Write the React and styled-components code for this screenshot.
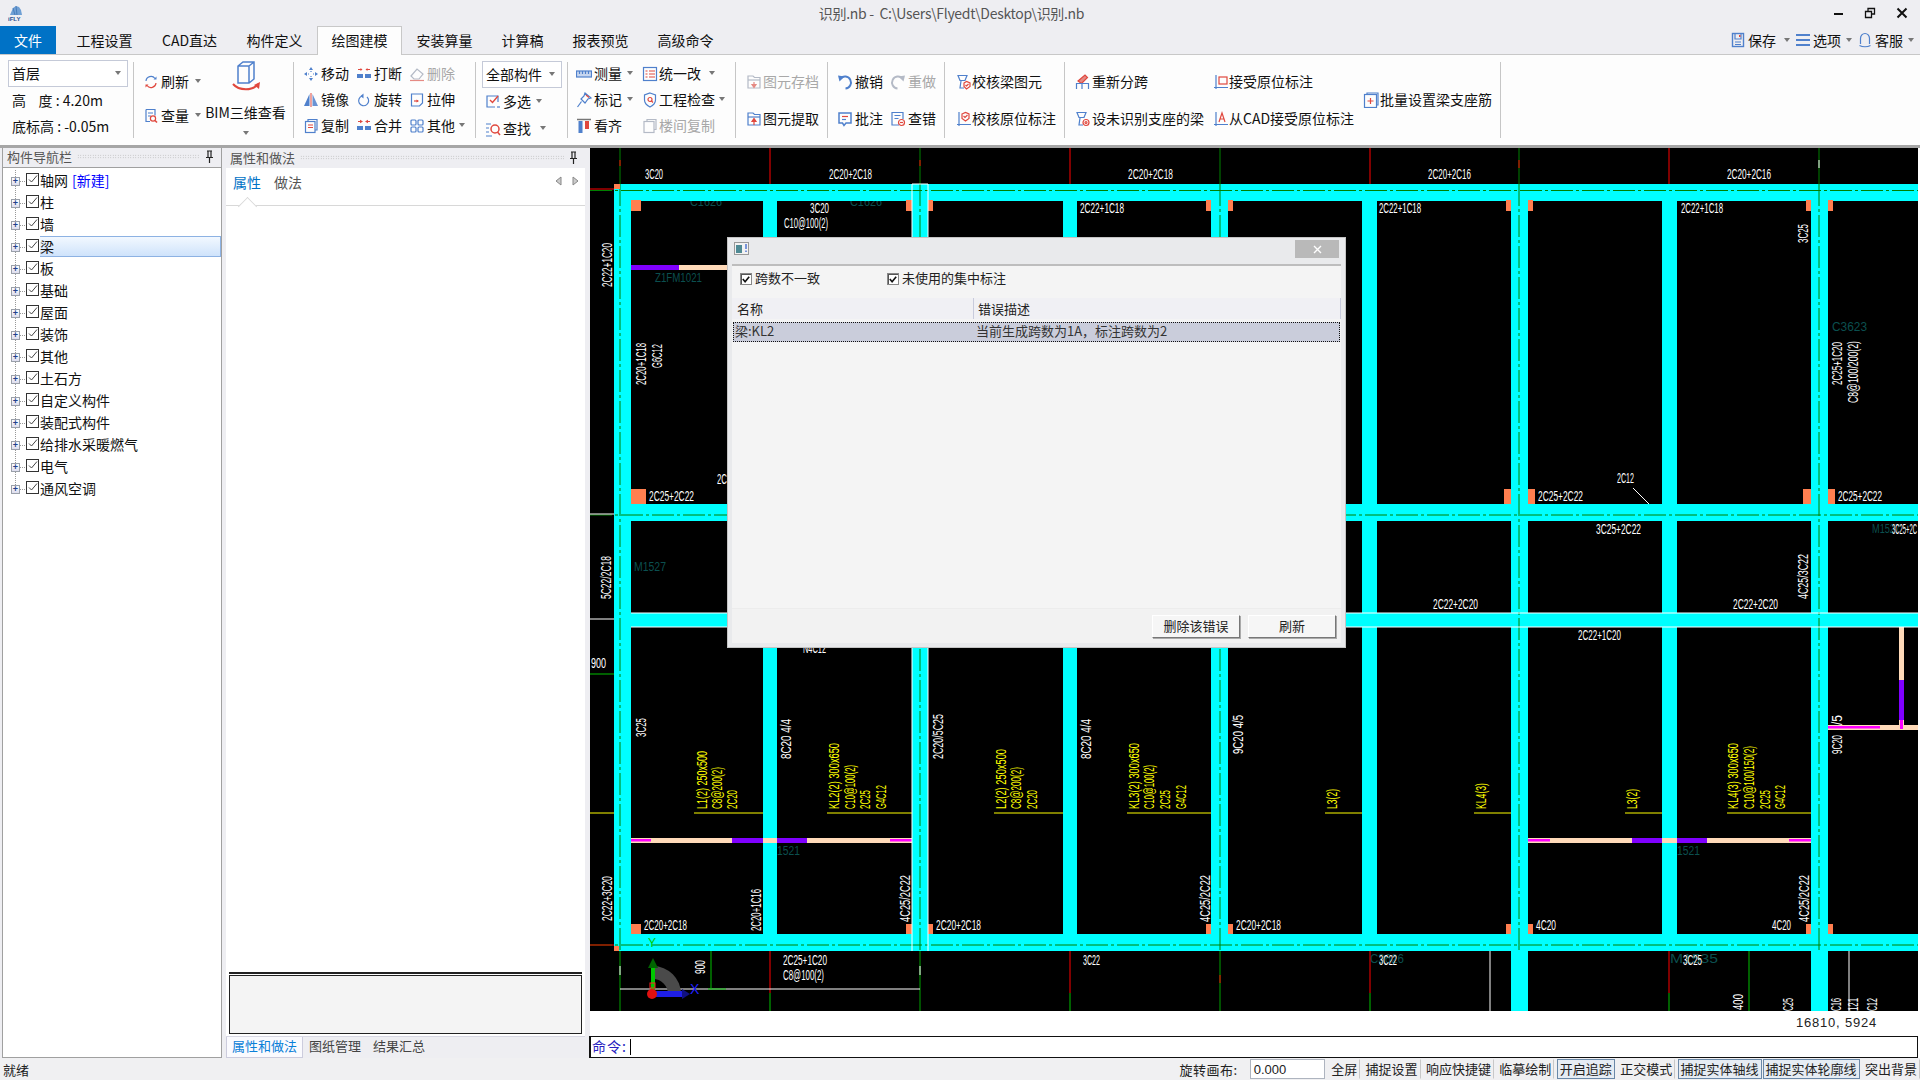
import styled, { createGlobalStyle } from "styled-components";

const BLUE = "#4f80cc";
const RED = "#e0483e";
const GREY = "#b4bac6";
const FONT = `"Noto Sans CJK SC", "Liberation Sans", sans-serif`;

const GlobalStyle = createGlobalStyle`
  html, body { margin: 0; padding: 0; background: #eeeef2; }
  * { box-sizing: border-box; }
  body { font-family: ${FONT}; font-size: 14px; color: #111; }
`;

const Page = styled.div`
  width: 1920px;
  height: 1080px;
  display: flex;
  flex-direction: column;
  overflow: hidden;
  background: #eeeef2;
`;

/* title bar */
const TitleBar = styled.div`
  height: 26px;
  display: grid;
  grid-template-columns: 1fr auto 1fr;
  align-items: center;
  padding: 0 0 0 8px;
`;
const TitleText = styled.div`
  color: #555;
  font-size: 14px;
  line-height: 26px;
  letter-spacing: -0.3px;
  white-space: pre;
  margin-right: 25px;
`;
const WindowButtons = styled.div`
  display: flex;
  justify-content: flex-end;
  align-items: center;
  gap: 20px;
  padding-right: 12px;
`;

/* tabs */
const TabRow = styled.div`
  height: 29px;
  display: flex;
  align-items: stretch;
  border-bottom: 1px solid #c8c8c8;
`;
const FileTab = styled.div`
  width: 56px;
  margin-right: 6px;
  background: #0072c6;
  color: #fff;
  text-align: center;
  line-height: 29px;
  flex-shrink: 0;
`;
const Tab = styled.div`
  padding: 0 14.5px;
  min-width: ${(p) => p.$min || 0}px;
  text-align: center;
  line-height: 29px;
  height: ${(p) => (p.$active ? "29px" : "28px")};
  background: ${(p) => (p.$active ? "#fdfdfd" : "transparent")};
  box-shadow: ${(p) => (p.$active ? "inset 1px 1px 0 #c8c8c8, inset -1px 0 0 #c8c8c8" : "none")};
`;
const QuickTools = styled.div`
  margin-left: auto;
  display: flex;
  align-items: center;
  gap: 5px;
  padding-right: 6px;
`;
const QuickTool = styled.div`
  display: flex;
  align-items: center;
  gap: 2px;
`;

/* ribbon */
const Ribbon = styled.div`
  height: 93px;
  display: flex;
  align-items: flex-start;
  padding-top: 7px;
  background: #fdfdfd;
  border-bottom: 3px solid #a6a6a6;
`;
const Group = styled.div`
  width: ${(p) => p.$w}px;
  height: 76px;
  flex-shrink: 0;
  padding-left: ${(p) => p.$pad || 0}px;
  padding-top: ${(p) => p.$top || 0}px;
  border-right: 1px solid #c6c6c6;
  display: grid;
  grid-template-columns: ${(p) => p.$cols || "1fr"};
  grid-auto-rows: ${(p) => p.$row || 26}px;
  align-items: center;
`;
const FreeGroup = styled.div`
  width: ${(p) => p.$w}px;
  height: 76px;
  flex-shrink: 0;
  border-right: 1px solid #c6c6c6;
`;
const Item = styled.div`
  display: flex;
  align-items: center;
  gap: ${(p) => p.$gap ?? 2}px;
  white-space: nowrap;
  line-height: 20px;
  padding: 0 0 4px ${(p) => p.$left || 0}px;
  color: ${(p) => (p.$off ? "#a8a8a8" : "#111")};
  grid-area: ${(p) => p.$area || "auto"};
  & > svg {
    margin-top: 2px;
  }
`;
const Caret = styled.span`
  width: 0;
  height: 0;
  margin-left: ${(p) => p.$ml || 4}px;
  border: 3px solid transparent;
  border-top: 4px solid #777;
  border-bottom: 0;
  flex-shrink: 0;
`;
const Combo = styled.div`
  height: 27px;
  width: ${(p) => p.$w}px;
  display: flex;
  align-items: center;
  justify-content: space-between;
  padding: 0 6px 2px ${(p) => p.$left}px;
  background: #fff;
  border: 1px solid #c5cad8;
  margin-top: ${(p) => p.$mt || 0}px;
`;
const FloorColumn = styled.div`
  padding-left: 8px;
  display: flex;
  flex-direction: column;
`;
const FloorLine = styled.div`
  line-height: 20px;
  padding-left: 4px;
  margin-top: ${(p) => p.$mt}px;
  white-space: pre;
`;
const RefreshGrid = styled.div`
  display: grid;
  grid-template-columns: 62px 81px;
  padding-left: 9px;
`;
const RefreshColumn = styled.div`
  display: flex;
  flex-direction: column;
  gap: 10px;
  padding-top: 9px;
`;
const BimButton = styled.div`
  display: flex;
  flex-direction: column;
  align-items: center;
  line-height: 20px;
  white-space: nowrap;
  margin-top: -2px;
`;
const BimLabel = styled.div`
  margin-top: 8px;
`;
const BimCaret = styled(Caret)`
  margin: 9px 0 0;
`;

const Ico = styled.svg.attrs({ viewBox: "0 0 16 16" })`
  width: 16px;
  height: 16px;
  flex-shrink: 0;
  fill: none;
  stroke-width: 1.2;
`;

/* main area */
const Main = styled.div`
  height: 910px;
  display: flex;
  align-items: stretch;
`;
const NavPanel = styled.div`
  width: 220px;
  margin: 0 4px 0 2px;
  display: flex;
  flex-direction: column;
  background: #fff;
  border: 1px solid #a0a0a0;
  border-top: 0;
`;
const PanelHead = styled.div`
  height: 20px;
  flex-shrink: 0;
  display: flex;
  align-items: center;
  gap: 5px;
  padding: 0 7px 2px 4px;
  background: #eeeef2;
  color: #555;
  font-size: 13px;
  border-bottom: ${(p) => (p.$line ? "1px solid #a0a0a0" : "0")};
`;
const Grip = styled.div`
  flex: 1;
  height: 5px;
  background-image: radial-gradient(#b4b4b4 0.7px, transparent 0.8px);
  background-size: 2.5px 2.5px;
`;
const Tree = styled.div`
  padding-top: 2px;
`;
const TreeRow = styled.div`
  height: 22px;
  display: flex;
  align-items: center;
  padding-left: 8px;
  background-image: repeating-linear-gradient(to bottom, #999 0 1px, transparent 1px 2px);
  background-size: 1px ${(p) => (p.$last ? "11px" : "22px")};
  background-position: 12px 0;
  background-repeat: no-repeat;
`;
const Plus = styled.span`
  width: 9px;
  height: 9px;
  flex-shrink: 0;
  border: 1px solid #9aa0aa;
  background: linear-gradient(#fff, #dde);
  display: flex;
  align-items: center;
  justify-content: center;
  color: #22408c;
  font: bold 9px/7px "Liberation Sans", sans-serif;
`;
const Dots = styled.span`
  width: 6px;
  height: 1px;
  flex-shrink: 0;
  background-image: repeating-linear-gradient(to right, #999 0 1px, transparent 1px 2px);
`;
const CheckBox = styled.span`
  width: 13px;
  height: 13px;
  margin-top: -3px;
  flex-shrink: 0;
  border: 1px solid #333;
  background: #fff;
  display: flex;
`;
const TreeLabel = styled.div`
  flex: 1;
  margin: -2px 0 0 1px;
  height: 21px;
  line-height: 18px;
  border: 1px solid ${(p) => (p.$sel ? "#8db2e3" : "transparent")};
  border-left-width: 0;
  background: ${(p) => (p.$sel ? "linear-gradient(#f2f8ff, #cfe3fb)" : "transparent")};
  white-space: nowrap;
`;
const NewLink = styled.span`
  color: #0000ff;
  margin-left: 4px;
`;

const PropsPanel = styled.div`
  width: 359px;
  margin-right: 5px;
  display: flex;
  flex-direction: column;
  background: #fff;
`;
const PropTabs = styled.div`
  height: 38px;
  flex-shrink: 0;
  display: flex;
  align-items: flex-start;
  gap: 13px;
  padding: 4px 6px 0 7px;
  border-bottom: 1px solid #d8d8d8;
  line-height: 20px;
`;
const PropTab = styled.div`
  position: relative;
  color: ${(p) => (p.$active ? "#0072c6" : "#555")};
  &::after {
    content: ${(p) => (p.$active ? '""' : "none")};
    position: absolute;
    left: 7px;
    top: 27px;
    width: 14px;
    height: 14px;
    background: #fff;
    border-left: 1px solid #d8d8d8;
    border-top: 1px solid #d8d8d8;
    transform: rotate(45deg) scale(0.9);
  }
`;
const PropArrows = styled.div`
  margin-left: auto;
  display: flex;
  gap: 10px;
  padding-top: 4px;
`;
const PropBody = styled.div`
  flex: 1;
`;
const NoteWrap = styled.div`
  padding: 0 3px;
  background: #fff;
`;
const NoteLine = styled.div`
  height: 2px;
  background: #222;
`;
const NoteBox = styled.div`
  height: 59px;
  margin-top: 1px;
  background: #f4f4f4;
  border: 1px solid #222;
`;
const BottomTabs = styled.div`
  height: 22px;
  margin-top: 2px;
  display: flex;
  background: #eeeef2;
  border-top: 1px solid #d8d8e4;
  font-size: 13px;
  line-height: 18px;
`;
const BottomTab = styled.div`
  padding: 0 6px;
  color: ${(p) => (p.$active ? "#0a80d8" : "#444")};
  background: ${(p) => (p.$active ? "#fafafe" : "transparent")};
  box-shadow: ${(p) => (p.$active ? "inset 1px 0 0 #ccd, inset -1px 0 0 #ccd, inset 0 -1px 0 #ccd" : "none")};
`;

const CanvasColumn = styled.div`
  position: relative;
  flex: 1;
  display: flex;
  flex-direction: column;
  background: #fff;
`;
const CadSvg = styled.svg`
  display: block;
  width: 1328px;
  height: 863px;
  background: #000;
  font-family: "Liberation Sans", sans-serif;
`;
const CoordRow = styled.div`
  height: 25px;
  line-height: 24px;
  text-align: right;
  padding-right: 43px;
  font-family: "Liberation Sans", sans-serif;
  font-size: 13px;
  letter-spacing: 0.8px;
  color: #222;
`;
const CommandRow = styled.div`
  height: 22px;
  width: 1329px;
  margin-left: -1px;
  display: flex;
  align-items: center;
  padding: 0 0 2px 1px;
  border: 1px solid #111;
  border-width: 1px 1px 1px 2px;
  color: #2a1fc0;
  letter-spacing: 1px;
`;
const CommandCursor = styled.span`
  width: 1px;
  height: 16px;
  margin: 2px 0 0 3px;
  background: #000;
`;

/* dialog */
const Dialog = styled.div`
  position: absolute;
  left: 137px;
  top: 89px;
  width: 619px;
  height: 411px;
  display: flex;
  flex-direction: column;
  padding: 0 4px 4px;
  background: #e9eaec;
  border: 1px solid #c4c4c4;
  font-size: 13px;
  color: #222;
`;
const DialogHead = styled.div`
  height: 28px;
  flex-shrink: 0;
  display: flex;
  align-items: center;
  justify-content: space-between;
  padding: 0 2px 5px 2px;
  border-bottom: 2px solid #bdbdbd;
`;
const DialogClose = styled.div`
  width: 44px;
  height: 18px;
  margin-top: 1px;
  background: #b9b9b9;
  color: #fff;
  display: flex;
  align-items: center;
  justify-content: center;
`;
const DialogBody = styled.div`
  flex: 1;
  display: flex;
  flex-direction: column;
  background: #f4f4f4;
`;
const FilterRow = styled.div`
  height: 32px;
  flex-shrink: 0;
  display: flex;
  align-items: flex-start;
  padding: 3px 0 0 8px;
`;
const Filter = styled.label`
  width: ${(p) => p.$w}px;
  display: flex;
  align-items: center;
  gap: 3px;
  line-height: 18px;
`;
const DialogCheck = styled.span`
  width: 12px;
  height: 12px;
  margin-top: 2px;
  border: 1px solid #888;
  box-shadow: inset 1px 1px 0 #555;
  background: #fff;
  display: flex;
`;
const ListHead = styled.div`
  height: 21px;
  flex-shrink: 0;
  display: grid;
  grid-template-columns: 236px 1fr;
  padding: 0 0 0 5px;
  background: #f0f0f4;
  line-height: 21px;
`;
const ListCell = styled.div`
  padding-left: ${(p) => p.$pad || 0}px;
  border-left: ${(p) => (p.$div ? "1px solid #c8cbdc" : "0")};
  border-right: ${(p) => (p.$div ? "1px solid #c8cbdc" : "0")};
`;
const ListRow = styled.div`
  height: 20px;
  margin: 3px 1px 0 1px;
  flex-shrink: 0;
  display: grid;
  grid-template-columns: 241px 1fr;
  padding-left: 2px;
  background: #cacddb;
  outline: 1px dotted #111;
  outline-offset: -1px;
  line-height: 18px;
  color: #333;
`;
const DialogFill = styled.div`
  flex: 1;
`;
const DialogFoot = styled.div`
  height: 35px;
  flex-shrink: 0;
  display: flex;
  justify-content: flex-end;
  gap: 8px;
  padding: 6px 5px 0 0;
  background: #f2f2f2;
  border-top: 1px solid #ececec;
`;
const DialogButton = styled.div`
  width: 88px;
  height: 23px;
  text-align: center;
  line-height: 19px;
  background: #f6f6f6;
  border: 1px solid;
  border-color: #fff #777 #777 #fff;
  box-shadow: 1px 1px 0 #aaa;
`;

/* status bar */
const StatusBar = styled.div`
  height: 22px;
  display: flex;
  align-items: center;
  padding-left: 3px;
  background: #f0f0f2;
  font-size: 13px;
  color: #222;
`;
const StatusLeft = styled.div`
  margin-right: auto;
`;
const RotateLabel = styled.div`
  margin-right: 12px;
  letter-spacing: 0.5px;
`;
const RotateInput = styled.div`
  width: 75px;
  height: 20px;
  margin-right: 1px;
  padding-left: 3px;
  background: #fff;
  border: 1px solid #aeb4bf;
  line-height: 19px;
  font-family: "Liberation Sans", sans-serif;
  font-size: 13px;
`;
const StatusButton = styled.div`
  height: 20px;
  padding: 0 2px;
  margin-left: ${(p) => p.$ml ?? 2.4}px;
  line-height: 18px;
  white-space: nowrap;
  background: ${(p) => (p.$on ? "#e6ecf3" : "transparent")};
  border: 1px solid ${(p) => (p.$on ? "#6a88a8" : "transparent")};
  border-right-color: ${(p) => (p.$on ? "#6a88a8" : "#c8c8c8")};
`;

/* small drawings */
const icons = {
  refresh: (
    <Ico>
      <path d="M3 7a5 5 0 0 1 9-2.5" stroke={BLUE} />
      <path d="M13.5 2.5v3h-3z" fill={BLUE} />
      <path d="M13 9a5 5 0 0 1-9 2.5" stroke={RED} />
      <path d="M2.5 13.5v-3h3z" fill={RED} />
    </Ico>
  ),
  audit: (
    <Ico>
      <path d="M3 1.5h9v6M3 1.5v12h4" stroke={BLUE} />
      <path d="M5 5h5M5 8h3" stroke={BLUE} />
      <circle cx="10" cy="10.5" r="2.6" stroke={RED} />
      <path d="M12 12.5l2 2" stroke={RED} strokeWidth="1.6" />
    </Ico>
  ),
  move: (
    <Ico>
      <path d="M8 1l2 3H6zM8 15l-2-3h4zM1 8l3-2v4zM15 8l-3 2V6z" fill={BLUE} />
      <path d="M8 5v1M8 10v1M5 8h1M10 8h1" stroke={BLUE} />
    </Ico>
  ),
  split: (
    <Ico>
      <path d="M1 8h6v4H1zM9 8h6v4H9z" fill={BLUE} />
      <path d="M2 3.5h3.5M14 3.5h-3.5" stroke={RED} />
      <path d="M6.5 3.5L4.5 2v3zM9.5 3.5l2-1.500v3z" fill={RED} />
    </Ico>
  ),
  erase: (
    <Ico>
      <path d="M2 10l6-7 6 5-4 5H5z" stroke={GREY} />
      <path d="M1 14.500h14" stroke="#e58a84" />
    </Ico>
  ),
  mirror: (
    <Ico>
      <path d="M6.500 2v12H1z" fill={BLUE} />
      <path d="M7.500 1h1v14h-1z" fill={RED} />
      <path d="M9.500 2v12H15z" fill={BLUE} opacity="0.85" />
    </Ico>
  ),
  rotate: (
    <Ico>
      <path d="M6 4a5 5 0 1 0 5 1" stroke={BLUE} />
      <path d="M7.500 1.500v5L4.500 4z" fill={BLUE} />
    </Ico>
  ),
  stretch: (
    <Ico>
      <path d="M2.500 2h11v9l-3 3h-8z" stroke={BLUE} />
      <path d="M5 9h4" stroke={RED} />
      <path d="M10 9L7.500 7.500v3z" fill={RED} />
    </Ico>
  ),
  copy: (
    <Ico>
      <path d="M5 3V1.500h9V12h-2" stroke={BLUE} />
      <rect x="2.500" y="3.500" width="9.500" height="11" stroke={BLUE} />
      <path d="M5 7h5M5 9.500h5" stroke={RED} />
    </Ico>
  ),
  merge: (
    <Ico>
      <path d="M1 8h6v4H1zM9 8h6v4H9z" fill={BLUE} />
      <path d="M2 3.500h2M14 3.500h-2" stroke={RED} />
      <path d="M7 3.500L4 1.800v3.400zM9 3.500l3-1.700v3.400z" fill={RED} />
    </Ico>
  ),
  grid: (
    <Ico>
      <rect x="2" y="2" width="5" height="5" rx="1" stroke={BLUE} />
      <rect x="9" y="2" width="5" height="5" rx="1" stroke={BLUE} />
      <rect x="2" y="9" width="5" height="5" rx="1" stroke={BLUE} />
      <rect x="9" y="9" width="5" height="5" rx="1" stroke={BLUE} />
    </Ico>
  ),
  multi: (
    <Ico>
      <path d="M13 8V2H2v11h8" stroke={BLUE} />
      <path d="M5 6l2.500 2.500L13 2" stroke={RED} strokeWidth="1.400" />
      <path d="M12 13h3" stroke={BLUE} />
    </Ico>
  ),
  find: (
    <Ico>
      <path d="M1 3h5M1 7h3M1 11h3M1 15h6" stroke={BLUE} />
      <circle cx="10" cy="8" r="4" stroke={RED} strokeWidth="1.500" />
      <path d="M12.500 11l2.500 3" stroke={RED} strokeWidth="1.500" />
    </Ico>
  ),
  ruler: (
    <Ico>
      <rect x="0.500" y="5" width="15" height="6" fill="#c7d6ef" stroke={BLUE} />
      <path d="M3.500 5v3M6.500 5v3M9.500 5v3M12.500 5v3" stroke={BLUE} />
    </Ico>
  ),
  pin: (
    <Ico>
      <path d="M9 1l6 5-3 1-3 4-4-4 3-3z" stroke={BLUE} />
      <path d="M5.500 9.500L1.500 15" stroke={BLUE} />
      <path d="M10 3l3 2.500" stroke={RED} />
    </Ico>
  ),
  align: (
    <Ico>
      <path d="M1 1.500h14" stroke="#777" strokeWidth="1.500" />
      <rect x="2.500" y="3" width="4" height="12" fill={BLUE} />
      <rect x="9" y="3" width="4" height="8" fill={RED} />
    </Ico>
  ),
  list: (
    <Ico>
      <rect x="1.500" y="1.500" width="13" height="13" stroke={BLUE} />
      <path d="M3.500 5h2M3.500 8h2M3.500 11h2M7 5h6M7 8h6M7 11h6" stroke={RED} />
    </Ico>
  ),
  shield: (
    <Ico>
      <path d="M8 1l5.500 2v5c0 3.500-2.500 5.500-5.500 7C5 13.500 2.500 11.500 2.500 8V3z" stroke={BLUE} />
      <circle cx="8" cy="7.500" r="2" stroke={RED} />
      <path d="M9.500 9l1.500 1.500" stroke={RED} />
    </Ico>
  ),
  floors: (
    <Ico>
      <path d="M5 3.500V1.500h9v10h-2" stroke={GREY} />
      <rect x="2" y="3.500" width="10" height="11" stroke={GREY} />
    </Ico>
  ),
  save2: (
    <Ico>
      <path d="M2 14V2h5l1.500 1.500H14V14z" stroke={GREY} />
      <path d="M2 6h12" stroke={GREY} />
      <path d="M8 8v3M6 10.500h4L8 13.500z" fill="#e58a84" stroke="#e58a84" />
    </Ico>
  ),
  fetch: (
    <Ico>
      <path d="M2 14V2h5l1.500 1.500H14V14z" stroke={BLUE} />
      <path d="M2 6h12" stroke={BLUE} />
      <path d="M8 14v-3M6 10.500h4L8 7.500z" fill={RED} stroke={RED} />
    </Ico>
  ),
  undo: (
    <Ico>
      <path d="M3.500 4.500a6 6 0 1 1 5 10" stroke={BLUE} strokeWidth="2" />
      <path d="M1 1.500l6.500 1-5 5z" fill={BLUE} />
    </Ico>
  ),
  redo: (
    <Ico>
      <path d="M12.500 4.500a6 6 0 1 0-5 10" stroke={GREY} strokeWidth="2" />
      <path d="M15 1.500l-6.500 1 5 5z" fill={GREY} />
    </Ico>
  ),
  note: (
    <Ico>
      <path d="M2 2h12v10H9l-2 2.500L5.500 12H2z" stroke={BLUE} strokeWidth="1.500" />
      <path d="M5 5.500h6" stroke={RED} />
      <path d="M5 8.500h4" stroke={BLUE} />
    </Ico>
  ),
  errors: (
    <Ico>
      <path d="M9 14H2V1.500h11V8" stroke={BLUE} />
      <path d="M4.500 4.500h6M4.500 7.500h4" stroke={BLUE} />
      <circle cx="11.500" cy="11.500" r="3" stroke={RED} />
      <path d="M10 11.500h3" stroke={RED} />
    </Ico>
  ),
  beamCheck: (
    <Ico>
      <path d="M2 1.500h9l-2 5h-5z" stroke={BLUE} />
      <path d="M5 7l-1 7h4" stroke={BLUE} />
      <path d="M8 9l2.500-1.500L14 9v3.500L10.500 15 8 12.500z" stroke={RED} />
      <path d="M9.500 11l1 1 2-2" stroke={RED} />
    </Ico>
  ),
  markCheck: (
    <Ico>
      <path d="M3 1v14M1 13.500h14" stroke={BLUE} />
      <path d="M6 3l3.500-1.500L13 3v4.500L9.500 10 6 7.500z" stroke={RED} />
      <path d="M7.500 5l1.500 1.500 2.500-2.500" stroke={RED} />
    </Ico>
  ),
  resplit: (
    <Ico>
      <path d="M3 7l7-6 2.500 2.500-6 6z" fill="#e58a84" stroke={RED} />
      <path d="M1.500 15V9.500h12V15M7 9.500V15" stroke={BLUE} />
    </Ico>
  ),
  beamSet: (
    <Ico>
      <path d="M2 1.500h9l-2 5h-5z" stroke={BLUE} />
      <path d="M5 7l-1 7h4" stroke={BLUE} />
      <circle cx="11" cy="11.500" r="3" stroke={RED} />
      <circle cx="11" cy="11.500" r="1" stroke={RED} />
    </Ico>
  ),
  accept: (
    <Ico>
      <path d="M3 1v14M1 13.500h14" stroke={BLUE} />
      <rect x="6" y="3" width="8" height="7" stroke={RED} />
    </Ico>
  ),
  fromCad: (
    <Ico>
      <path d="M3 1v14M1 13.500h14" stroke={BLUE} />
      <path d="M6 11l3-9 3 9M7 8h4" stroke={RED} />
    </Ico>
  ),
  batch: (
    <Ico>
      <path d="M4 2.500V1h11v12h-1.500" stroke={BLUE} />
      <rect x="1.500" y="2.500" width="12" height="13" stroke={BLUE} />
      <path d="M7.500 6v6M4.500 9h6" stroke={RED} />
    </Ico>
  ),
  quickSave: (
    <Ico>
      <rect x="2.500" y="1.500" width="11" height="13" stroke={BLUE} strokeWidth="1.400" />
      <path d="M5 10h6M5 12.500h6M5 2v5h6V2" stroke={BLUE} />
      <path d="M9 3h1.500v2H9z" fill={RED} />
    </Ico>
  ),
  options: (
    <Ico>
      <path d="M1 3h14M1 8h14M1 13h14" stroke={BLUE} strokeWidth="2" />
    </Ico>
  ),
  service: (
    <Ico>
      <path d="M3.500 12V6.500a4.500 5 0 0 1 9 0V12M2.500 13.500c3 1.500 8 1.500 11 0" stroke={BLUE} />
    </Ico>
  ),
};

const TinyCheck = ({ heavy }) => (
  <svg viewBox="0 0 11 11" width="11" height="11">
    <path
      d={heavy ? "M2 5l2.500 3L9 2.500" : "M2 5.500l2.500 2.500L10 1.500"}
      fill="none"
      stroke={heavy ? "#111" : "#444"}
      strokeWidth={heavy ? 1.8 : 1}
    />
  </svg>
);

const Logo = () => (
  <svg width="16" height="16" viewBox="0 0 16 16">
    <path d="M2 10l3-7 3-2 3 1 2 3 1 5z" fill="#6f9fd4" />
    <path d="M5 3l2 7M8 1l1 9" stroke="#3e74b4" strokeWidth="0.800" />
    <text x="0" y="15.500" fontFamily="Liberation Sans" fontSize="6" fontWeight="700" fill="#1f4f92">
      iFLY
    </text>
  </svg>
);

const PinIcon = () => (
  <svg width="9" height="13" viewBox="0 0 9 13">
    <path d="M2 1h5M3 1v6M6 1v6M1 7.500h7M4.500 8v5" stroke="#222" fill="none" strokeWidth="1.200" />
  </svg>
);

const Arrow = ({ right }) => (
  <svg width="7" height="10" viewBox="0 0 7 10">
    <path d={right ? "M1 1l5 4-5 4z" : "M6 1L1 5l5 4z"} fill="#ccc" stroke="#888" />
  </svg>
);

const WinMin = () => (
  <svg width="12" height="12" viewBox="0 0 12 12">
    <path d="M2 7h9" stroke="#111" strokeWidth="2" />
  </svg>
);
const WinRestore = () => (
  <svg width="12" height="12" viewBox="0 0 12 12">
    <path d="M1.500 4.500h6v6h-6zM4 4V1.500h6.500V7H8" fill="none" stroke="#111" strokeWidth="1.300" />
  </svg>
);
const WinClose = () => (
  <svg width="12" height="12" viewBox="0 0 12 12">
    <path d="M1.500 1.500l9 9M10.500 1.500l-9 9" stroke="#111" strokeWidth="2" />
  </svg>
);
const DialogIcon = () => (
  <svg width="15" height="13" viewBox="0 0 15 13">
    <rect x="0.500" y="0.500" width="14" height="12" fill="#f2f2f2" stroke="#999" />
    <rect x="2" y="3" width="6" height="8" fill="#4f8a94" />
    <path d="M12 2v5M12 8.500v1.500" stroke="#2a56c8" strokeWidth="1.200" />
  </svg>
);

const RI = ({ icon, label, caret, off, gap, ml, area, left }) => (
  <Item $off={off} $gap={gap} $area={area} $left={left}>
    {icons[icon]}
    <span>{label}</span>
    {caret && <Caret $ml={ml} />}
  </Item>
);

/* CAD drawing data: x values and y values are in screen pixels of the window */
const COLUMNS = [
  [614, 631], [763, 777], [912, 928], [1063, 1077], [1211, 1228],
  [1362, 1377], [1511, 1528], [1662, 1677], [1811, 1828],
];
const BEAMS = [[184, 201, 190.5], [504, 521, 515], [613, 627, 0], [934, 951, 945]];
const AXES = [620, 920, 1220, 1519, 1819];
const ORANGE = [
  [614, 184, 6, 5], [631, 200, 10, 11], [906, 200, 6, 11], [928, 200, 5, 11], [1206, 200, 5, 11],
  [1228, 200, 5, 11], [1506, 200, 5, 11], [1528, 200, 5, 11], [1806, 200, 5, 11], [1828, 200, 5, 11],
  [631, 489, 15, 15], [1504, 489, 7, 15], [1528, 489, 7, 15], [1803, 489, 8, 15], [1828, 489, 7, 15],
  [631, 924, 10, 10], [906, 924, 6, 10], [928, 924, 5, 10], [1206, 924, 5, 10], [1228, 924, 5, 10],
  [1506, 924, 5, 10], [1528, 924, 5, 10], [1806, 924, 5, 10], [1828, 924, 5, 10], [614, 946, 5, 5],
];
const BARS = [
  ["#ffdab9", 631, 265, 132, 5], ["#8000ff", 631, 265, 48, 5],
  ["#ffdab9", 631, 838, 281, 5], ["#8000ff", 732, 838, 31, 5], ["#8000ff", 777, 838, 30, 5],
  ["#ff00ff", 631, 839, 20, 2.500], ["#ff00ff", 890, 839, 22, 2.500],
  ["#ffdab9", 1528, 838, 283, 5], ["#8000ff", 1632, 838, 30, 5], ["#8000ff", 1677, 838, 30, 5],
  ["#ff00ff", 1528, 839, 22, 2.500], ["#ff00ff", 1789, 839, 22, 2.500],
  ["#ffdab9", 1828, 725, 90, 5], ["#ff00ff", 1828, 726, 52, 2.500],
  ["#ffdab9", 1899, 627, 5, 98], ["#8000ff", 1899, 680, 5, 40], ["#ff00ff", 1900, 720, 3, 9],
];
const LINES = [
  ["#ff0000", 770, 148, 770, 184], ["#008000", 620, 148, 620, 184], ["#ff0000", 620, 160, 620, 166],
  ["#008000", 920, 148, 920, 184], ["#ff0000", 920, 160, 920, 166], ["#ff0000", 1070, 148, 1070, 184],
  ["#008000", 1220, 148, 1220, 184], ["#ff0000", 1370, 148, 1370, 184], ["#008000", 1519, 148, 1519, 184],
  ["#ff0000", 1519, 160, 1519, 168], ["#ff0000", 1669, 148, 1669, 184], ["#008000", 1819, 148, 1819, 184],
  ["#ffffff", 1819, 160, 1819, 168],
  ["#ff0000", 590, 189, 614, 189], ["#ffffff", 590, 514, 614, 514], ["#ffffff", 590, 619, 614, 619],
  ["#00c000", 590, 674, 614, 674], ["#ffff00", 590, 813, 614, 813], ["#ff0000", 590, 945, 614, 945],
  ["#ffff00", 694, 813, 763, 813], ["#ffff00", 827, 813, 912, 813], ["#ffff00", 994, 813, 1063, 813],
  ["#ffff00", 1127, 813, 1211, 813], ["#ffff00", 1325, 813, 1362, 813], ["#ffff00", 1474, 813, 1511, 813],
  ["#ffff00", 1625, 813, 1662, 813], ["#ffff00", 1727, 813, 1811, 813],
  ["#ffffff", 912, 184, 912, 951], ["#ffffff", 928, 184, 928, 951], ["#ffffff", 912, 184, 928, 184],
  ["#ffffff", 631, 613, 1920, 613], ["#ffffff", 631, 627, 1920, 627],
  ["#00a000", 620, 951, 620, 1011], ["#ffffff", 620, 966, 620, 975], ["#ff0000", 770, 951, 770, 993],
  ["#00c000", 770, 993, 770, 1011], ["#00a000", 920, 951, 920, 1011], ["#ffffff", 920, 966, 920, 975],
  ["#ff0000", 1070, 951, 1070, 993], ["#00c000", 1070, 993, 1070, 1011], ["#00a000", 1220, 951, 1220, 1011],
  ["#ff0000", 1220, 975, 1220, 983], ["#ff0000", 1370, 951, 1370, 993], ["#00c000", 1370, 993, 1370, 1011],
  ["#ffffff", 1490, 951, 1490, 1011], ["#ff0000", 1669, 951, 1669, 993], ["#00c000", 1669, 993, 1669, 1011],
  ["#00c000", 1749, 951, 1749, 1011], ["#ffffff", 1849, 951, 1849, 1011],
  ["#ffffff", 620, 989, 920, 989], ["#00c000", 711, 951, 711, 989], ["#00c000", 708, 989, 726, 989],
  ["#ffffff", 1633, 488, 1649, 504],
];
const H_TEXT = [
  ["3C20", 645, 663, 179], ["2C20+2C18", 829, 872, 179], ["2C20+2C18", 1128, 1173, 179],
  ["2C20+2C16", 1428, 1471, 179], ["2C20+2C16", 1727, 1771, 179],
  ["3C20", 810, 829, 213], ["C10@100(2)", 784, 828, 228],
  ["2C22+1C18", 1080, 1124, 213], ["2C22+1C18", 1379, 1421, 213], ["2C22+1C18", 1681, 1723, 213],
  ["2C25+2C22", 649, 694, 501], ["2C25+2C22", 1538, 1583, 501], ["2C25+2C22", 1838, 1882, 501],
  ["2C12", 1617, 1634, 483], ["3C25+2C22", 1596, 1641, 534], ["3C25+2C", 1892, 1917, 534],
  ["2C22+2C20", 1433, 1478, 609], ["2C22+2C20", 1733, 1778, 609], ["2C22+1C20", 1578, 1621, 640],
  ["900", 591, 606, 668], ["N4C12", 803, 826, 653], ["2C", 717, 727, 484],
  ["2C20+2C18", 644, 687, 930], ["2C20+2C18", 936, 981, 930], ["2C20+2C18", 1236, 1281, 930],
  ["4C20", 1536, 1556, 930], ["4C20", 1772, 1791, 930],
  ["2C25+1C20", 783, 827, 965], ["C8@100(2)", 783, 824, 980], ["3C22", 1083, 1100, 965],
  ["3C22", 1379, 1397, 965], ["3C25", 1683, 1702, 965],
];
const V_TEXT = [
  ["2C22+1C20", 607, 243, 287], ["2C20+1C18", 641, 343, 385], ["G6C12", 657, 344, 368],
  ["5C22/2C18", 606, 556, 599], ["2C22+3C20", 607, 876, 921], ["3C25", 641, 718, 737],
  ["8C20 4/4", 786, 719, 759], ["2C20+1C16", 756, 889, 931], ["4C25/2C22", 905, 875, 922],
  ["2C20/5C25", 938, 714, 759], ["8C20 4/4", 1086, 719, 759], ["9C20 4/5", 1238, 715, 754],
  ["4C25/2C22", 1205, 875, 922], ["9C20", 1837, 735, 754], ["/5", 1837, 715, 725],
  ["4C25/2C22", 1804, 875, 922], ["3C25", 1803, 224, 243], ["2C25+1C20", 1837, 342, 385],
  ["C8@100/200(2)", 1853, 341, 403], ["4C25/3C22", 1803, 554, 599], ["900", 700, 960, 974],
  ["400", 1738, 994, 1010], ["C25", 1788, 998, 1011], ["C16", 1836, 998, 1011],
  ["121", 1853, 998, 1011], ["C12", 1872, 998, 1011],
];
const Y_TEXT = [
  ["L1(2) 250x500", 702, 751, 809], ["C8@200(2)", 717, 767, 809], ["2C20", 732, 790, 809],
  ["KL2(2) 300x650", 834, 743, 809], ["C10@100(2)", 850, 765, 809], ["2C25", 865, 790, 809], ["G4C12", 881, 785, 809],
  ["L2(2) 250x500", 1001, 749, 809], ["C8@200(2)", 1016, 767, 809], ["2C20", 1032, 790, 809],
  ["KL3(2) 300x650", 1134, 743, 809], ["C10@100(2)", 1149, 765, 809], ["2C25", 1165, 790, 809], ["G4C12", 1181, 785, 809],
  ["L3(2)", 1332, 789, 809], ["KL4(3)", 1481, 783, 809], ["L3(2)", 1632, 789, 809],
  ["KL4(3) 300x650", 1733, 743, 809], ["C10@100/150(2)", 1749, 746, 809], ["2C25", 1765, 790, 809], ["G4C12", 1780, 785, 809],
];
const TEAL_TEXT = [
  ["C3623", 1832, 1867, 331], ["Z1FM1021", 655, 702, 282], ["C1626", 690, 722, 206], ["C1626", 850, 882, 206],
  ["M1527", 634, 666, 571], ["1521", 777, 800, 855], ["1521", 1677, 1700, 855], ["M1527", 1872, 1900, 533],
  ["C3626", 1370, 1404, 963], ["M1535", 1670, 1718, 963],
];

const CadHorizontal = ({ t, x1, x2, y, fill, size = 14 }) => (
  <text x={x1} y={y} fill={fill} fontSize={size} textLength={x2 - x1} lengthAdjust="spacingAndGlyphs">
    {t}
  </text>
);
const CadVertical = ({ t, x, y1, y2, fill }) => (
  <text
    x={x + 5}
    y={y2}
    transform={`rotate(-90 ${x + 5} ${y2})`}
    fill={fill}
    fontSize={14}
    textLength={y2 - y1}
    lengthAdjust="spacingAndGlyphs"
  >
    {t}
  </text>
);

const CadDrawing = () => (
  <CadSvg viewBox="590 148 1328 863">
    {TEAL_TEXT.map(([t, x1, x2, y]) => (
      <CadHorizontal key={t + x1} t={t} x1={x1} x2={x2} y={y} fill="#0b4f4f" size={12} />
    ))}
    {COLUMNS.map(([a, b]) => (
      <rect key={a} x={a} y={184} width={b - a} height={767} fill="#00ffff" />
    ))}
    <rect x={1511} y={951} width={17} height={60} fill="#00ffff" />
    <rect x={1811} y={951} width={17} height={60} fill="#00ffff" />
    {BEAMS.map(([a, b]) => (
      <rect key={a} x={614} y={a} width={1304} height={b - a} fill="#00ffff" />
    ))}
    {BEAMS.filter((b) => b[2]).map(([a, , d]) => (
      <line key={a} x1={590} y1={d} x2={1918} y2={d} stroke="#008000" strokeDasharray="22 3 3 3" />
    ))}
    {AXES.map((x) => (
      <line key={x} x1={x} y1={184} x2={x} y2={951} stroke="#008000" strokeDasharray="22 3 3 3" />
    ))}
    {ORANGE.map(([x, y, w, h]) => (
      <rect key={`${x}-${y}`} x={x} y={y} width={w} height={h} fill="#ff7f50" />
    ))}
    {BARS.map(([c, x, y, w, h]) => (
      <rect key={`${c}${x}${y}`} x={x} y={y} width={w} height={h} fill={c} />
    ))}
    {LINES.map(([c, x1, y1, x2, y2]) => (
      <line key={`${x1}${y1}${x2}${y2}${c}`} x1={x1} y1={y1} x2={x2} y2={y2} stroke={c} />
    ))}
    {H_TEXT.map(([t, x1, x2, y]) => (
      <CadHorizontal key={t + x1 + y} t={t} x1={x1} x2={x2} y={y} fill="#fff" />
    ))}
    {V_TEXT.map(([t, x, y1, y2]) => (
      <CadVertical key={t + x + y1} t={t} x={x} y1={y1} y2={y2} fill="#fff" />
    ))}
    {Y_TEXT.map(([t, x, y1, y2]) => (
      <CadVertical key={t + x + y1} t={t} x={x} y1={y1} y2={y2} fill="#ffff00" />
    ))}
    {/* axis gizmo at the origin */}
    <path d="M653 966a28 28 0 0 1 28 28h-13a15 15 0 0 0-15-15z" fill="#4a4a4a" />
    <rect x={651} y={966} width={4} height={28} fill="#00c800" />
    <path d="M648 968l5-10 5 10z" fill="#006400" />
    <rect x={652} y={991} width={30} height={6} fill="#1e1ee6" />
    <path d="M682 989l8 5-8 5z" fill="#101080" />
    <circle cx={652} cy={994} r={5} fill="#e01010" />
    <rect x={650} y={983} width={5} height={5} fill="none" stroke="#ff2020" />
    <text x={648} y={947} fill="#00c800" fontSize={12}>Y</text>
    <text x={690} y={994} fill="#2020ff" fontSize={14}>X</text>
  </CadSvg>
);

const TREE = [
  "轴网", "柱", "墙", "梁", "板", "基础", "屋面", "装饰", "其他", "土石方",
  "自定义构件", "装配式构件", "给排水采暖燃气", "电气", "通风空调",
];

export default function App() {
  return (
    <Page>
      <GlobalStyle />
      <TitleBar>
        <Logo />
        <TitleText>{"识别.nb -  C:\\Users\\Flyedt\\Desktop\\识别.nb"}</TitleText>
        <WindowButtons>
          <WinMin />
          <WinRestore />
          <WinClose />
        </WindowButtons>
      </TitleBar>

      <TabRow>
        <FileTab>文件</FileTab>
        <Tab>工程设置</Tab>
        <Tab $min={85}>CAD直达</Tab>
        <Tab>构件定义</Tab>
        <Tab $active>绘图建模</Tab>
        <Tab>安装算量</Tab>
        <Tab>计算稿</Tab>
        <Tab>报表预览</Tab>
        <Tab>高级命令</Tab>
        <QuickTools>
          <QuickTool>{icons.quickSave}保存<Caret $ml={6} /></QuickTool>
          <QuickTool>{icons.options}选项<Caret $ml={3} /></QuickTool>
          <QuickTool>{icons.service}客服<Caret $ml={3} /></QuickTool>
        </QuickTools>
      </TabRow>

      <Ribbon>
        <FreeGroup $w={134}>
          <FloorColumn>
            <Combo $w={120} $left={3} $mt={-2}>首层<Caret /></Combo>
            <FloorLine $mt={3}>{"高    度 : 4.20m"}</FloorLine>
            <FloorLine $mt={6}>{"底标高 : -0.05m"}</FloorLine>
          </FloorColumn>
        </FreeGroup>
        <FreeGroup $w={160}>
          <RefreshGrid>
            <RefreshColumn>
              <RI icon="refresh" label="刷新" caret />
              <RI icon="audit" label="查量" caret />
            </RefreshColumn>
            <BimButton>
              <svg width="34" height="34" viewBox="0 0 34 34">
                <path d="M9 6l5-4h11v17l-5 4H9zM9 6h11v17M20 6l5-4" fill="none" stroke={BLUE} strokeWidth="1.500" />
                <path d="M4 24c6 7 20 7 25 0" fill="none" stroke={RED} strokeWidth="2" />
                <path d="M31 22l-1 7-5-4z" fill={RED} />
              </svg>
              <BimLabel>BIM三维查看</BimLabel>
              <BimCaret />
            </BimButton>
          </RefreshGrid>
        </FreeGroup>
        <Group $w={182} $pad={9} $cols="53px 53px 60px">
          <RI icon="move" label="移动" />
          <RI icon="split" label="打断" />
          <RI icon="erase" label="删除" off />
          <RI icon="mirror" label="镜像" />
          <RI icon="rotate" label="旋转" />
          <RI icon="stretch" label="拉伸" />
          <RI icon="copy" label="复制" />
          <RI icon="merge" label="合并" />
          <RI icon="grid" label="其他" caret ml={2} />
        </Group>
        <Group $w={92} $pad={6} $row={27}>
          <Combo $w={80} $left={3} $mt={-2}>全部构件<Caret /></Combo>
          <Item $left={3}>{icons.multi}<span>多选</span><Caret $ml={3} /></Item>
          <Item $left={3}>{icons.find}<span>查找</span><Caret $ml={7} /></Item>
        </Group>
        <Group $w={168} $pad={8} $cols="66px 1fr">
          <RI icon="ruler" label="测量" caret ml={3} />
          <RI icon="list" label="统一改" caret gap={1} ml={7} />
          <RI icon="pin" label="标记" caret ml={3} />
          <RI icon="shield" label="工程检查" caret gap={1} ml={3} />
          <RI icon="align" label="看齐" />
          <RI icon="floors" label="楼间复制" off gap={1} />
        </Group>
        <Group $w={92} $pad={10} $row={37} $top={2}>
          <RI icon="save2" label="图元存档" off gap={1} />
          <RI icon="fetch" label="图元提取" gap={1} />
        </Group>
        <Group $w={117} $pad={9} $row={37} $top={2} $cols="53px 1fr">
          <RI icon="undo" label="撤销" />
          <RI icon="redo" label="重做" off />
          <RI icon="note" label="批注" />
          <RI icon="errors" label="查错" />
        </Group>
        <Group $w={120} $pad={11} $row={37} $top={2}>
          <RI icon="beamCheck" label="校核梁图元" gap={0} />
          <RI icon="markCheck" label="校核原位标注" gap={0} />
        </Group>
        <Group $w={436} $pad={10} $row={37} $top={2} $cols="138px 150px 1fr">
          <RI icon="batch" label="批量设置梁支座筋" gap={1} area="1 / 3 / 3 / 4" />
          <RI icon="resplit" label="重新分跨" gap={1} />
          <RI icon="accept" label="接受原位标注" gap={0} />
          <RI icon="beamSet" label="设未识别支座的梁" gap={1} />
          <RI icon="fromCad" label="从CAD接受原位标注" gap={0} />
        </Group>
      </Ribbon>

      <Main>
        <NavPanel>
          <PanelHead $line>
            构件导航栏
            <Grip />
            <PinIcon />
          </PanelHead>
          <Tree>
            {TREE.map((name, i) => (
              <TreeRow key={name} $last={i === TREE.length - 1}>
                <Plus>+</Plus>
                <Dots />
                <CheckBox><TinyCheck /></CheckBox>
                <TreeLabel $sel={name === "梁"}>
                  {name}
                  {i === 0 && <NewLink>[新建]</NewLink>}
                </TreeLabel>
              </TreeRow>
            ))}
          </Tree>
        </NavPanel>

        <PropsPanel>
          <PanelHead>
            属性和做法
            <Grip />
            <PinIcon />
          </PanelHead>
          <PropTabs>
            <PropTab $active>属性</PropTab>
            <PropTab>做法</PropTab>
            <PropArrows>
              <Arrow />
              <Arrow right />
            </PropArrows>
          </PropTabs>
          <PropBody />
          <NoteWrap>
            <NoteLine />
            <NoteBox />
          </NoteWrap>
          <BottomTabs>
            <BottomTab $active>属性和做法</BottomTab>
            <BottomTab>图纸管理</BottomTab>
            <BottomTab>结果汇总</BottomTab>
          </BottomTabs>
        </PropsPanel>

        <CanvasColumn>
          <CadDrawing />
          <CoordRow>16810, 5924</CoordRow>
          <CommandRow>命令:<CommandCursor /></CommandRow>

          <Dialog>
            <DialogHead>
              <DialogIcon />
              <DialogClose>
                <svg width="9" height="9" viewBox="0 0 9 9">
                  <path d="M1 1l7 7M8 1L1 8" stroke="#fff" strokeWidth="1.400" />
                </svg>
              </DialogClose>
            </DialogHead>
            <DialogBody>
              <FilterRow>
                <Filter $w={147}><DialogCheck><TinyCheck heavy /></DialogCheck>跨数不一致</Filter>
                <Filter $w={200}><DialogCheck><TinyCheck heavy /></DialogCheck>未使用的集中标注</Filter>
              </FilterRow>
              <ListHead>
                <ListCell>名称</ListCell>
                <ListCell $div $pad={4}>错误描述</ListCell>
              </ListHead>
              <ListRow>
                <ListCell>梁:KL2</ListCell>
                <ListCell>当前生成跨数为1A，标注跨数为2</ListCell>
              </ListRow>
              <DialogFill />
              <DialogFoot>
                <DialogButton>删除该错误</DialogButton>
                <DialogButton>刷新</DialogButton>
              </DialogFoot>
            </DialogBody>
          </Dialog>
        </CanvasColumn>
      </Main>

      <StatusBar>
        <StatusLeft>就绪</StatusLeft>
        <RotateLabel>旋转画布:</RotateLabel>
        <RotateInput>0.000</RotateInput>
        <StatusButton>全屏</StatusButton>
        <StatusButton>捕捉设置</StatusButton>
        <StatusButton>响应快捷键</StatusButton>
        <StatusButton>临摹绘制</StatusButton>
        <StatusButton $on>开启追踪</StatusButton>
        <StatusButton>正交模式</StatusButton>
        <StatusButton $on>捕捉实体轴线</StatusButton>
        <StatusButton $on $ml={1}>捕捉实体轮廓线</StatusButton>
        <StatusButton>突出背景</StatusButton>
      </StatusBar>
    </Page>
  );
}
